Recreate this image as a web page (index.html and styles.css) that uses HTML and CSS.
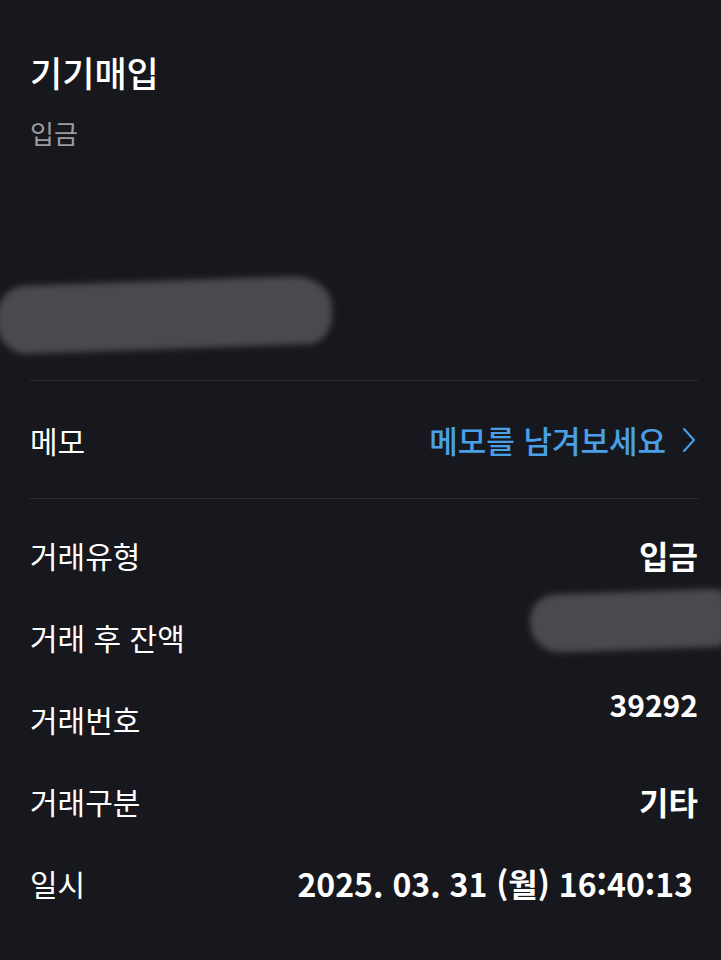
FILE: index.html
```html
<!DOCTYPE html>
<html lang="ko">
<head>
<meta charset="utf-8">
<link rel="stylesheet" href="styles.css">
</head>
<body>
<div class="page">
  <header class="head">
    <h1 class="title">기기매입</h1>
    <div class="sub">입금</div>
    <div class="redact redact-amount"></div>
  </header>
  <div class="divider"></div>
  <div class="memo-row">
    <span class="label">메모</span>
    <span class="memo-link">메모를 남겨보세요
      <svg class="chev" width="14" height="26" viewBox="0 0 14 26"><path d="M2 2 L12 13 L2 24" fill="none" stroke="#4aa0e8" stroke-width="2" stroke-linecap="round" stroke-linejoin="round"/></svg>
    </span>
  </div>
  <div class="divider"></div>
  <div class="rows">
    <div class="row"><span class="label">거래유형</span><span class="value">입금</span></div>
    <div class="row"><span class="label">거래 후 잔액</span><div class="redact redact-balance"></div></div>
    <div class="row"><span class="label">거래번호</span><span class="value value-up">39292</span></div>
    <div class="row"><span class="label">거래구분</span><span class="value">기타</span></div>
    <div class="row"><span class="label">일시</span><span class="value value-date">2025. 03. 31 (월) 16:40:13</span></div>
  </div>
</div>
</body>
</html>
```

FILE: styles.css
```css
html, body {
  margin: 0;
  padding: 0;
  background: #17181d;
}
body {
  font-family: "Noto Sans CJK KR", "Noto Sans", sans-serif;
  color: #ffffff;
  overflow: hidden;
}
.page {
  width: 721px;
  height: 960px;
  padding: 0 23px 0 30px;
  box-sizing: border-box;
}
.head {
  padding-top: 50px;
  height: 380px;
  box-sizing: border-box;
}
.title {
  margin: 0;
  font-size: 35px;
  font-weight: 500;
  line-height: 44px;
  color: #ffffff;
}
.sub {
  margin-top: 19px;
  font-size: 26px;
  line-height: 40px;
  color: #9b9ba0;
}
.redact {
  background: #4a4a4e;
  filter: blur(3px);
}
.redact-amount {
  margin-top: 128px;
  margin-left: -34px;
  width: 336px;
  height: 68px;
  border-radius: 30px 40px 24px 30px / 34px 30px 30px 34px;
  transform: rotate(-2deg);
}
.divider {
  height: 1px;
  background: #2c2e34;
}
.memo-row {
  height: 117px;
  display: flex;
  align-items: center;
  justify-content: space-between;
}
.label {
  font-size: 30px;
  line-height: 40px;
  color: #ffffff;
}
.memo-link {
  display: flex;
  align-items: center;
  gap: 16px;
  font-size: 31px;
  font-weight: 500;
  line-height: 40px;
  color: #4aa0e8;
}
.chev {
  margin-right: 2px;
}
.rows {
  padding-top: 15px;
}
.row {
  height: 82px;
  display: flex;
  align-items: center;
  justify-content: space-between;
}
.value {
  font-size: 32px;
  font-weight: 700;
  line-height: 40px;
  color: #ffffff;
}
.value-up {
  align-self: flex-start;
  font-size: 30px;
  margin-top: 6px;
}
.value-date {
  margin-right: 5px;
}
.redact-balance {
  align-self: flex-start;
  margin-top: -4px;
  margin-right: -28px;
  width: 196px;
  height: 58px;
  border-radius: 26px 10px 10px 30px;
  transform: rotate(-2deg);
}
```
